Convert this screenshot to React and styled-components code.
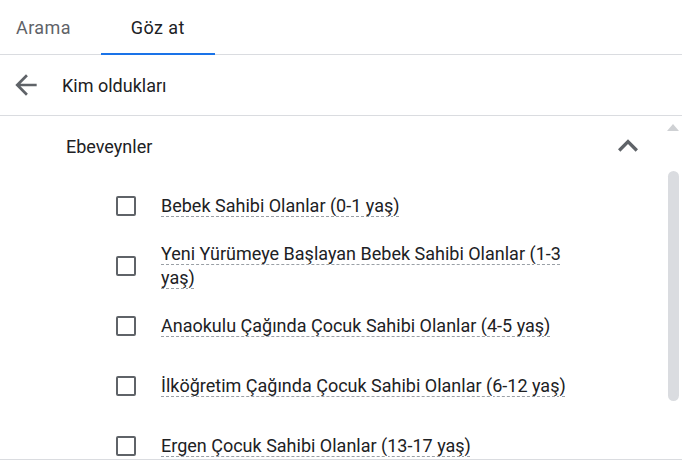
import React from "react";
import styled, { createGlobalStyle } from "styled-components";

const GlobalStyle = createGlobalStyle`
  html, body { margin: 0; padding: 0; background: #fff; }
  body { font-family: Roboto, "Noto Sans", Arial, sans-serif; }
  * { box-sizing: border-box; }
`;

const Page = styled.div`
  width: 682px;
  height: 465px;
  background: #fff;
  overflow: hidden;
  display: flex;
  flex-direction: column;
`;

const TabBar = styled.div`
  display: flex;
  height: 55px;
  border-bottom: 1px solid #dadce0;
  flex-shrink: 0;
`;

const Tab = styled.div`
  position: relative;
  display: flex;
  align-items: center;
  height: 100%;
  padding: ${(p) => (p.$first ? "0 30px 0 16px" : "0 30px")};
  font-size: 18px;
  font-weight: 400;
  letter-spacing: 0.4px;
  color: ${(p) => (p.$active ? "#202124" : "#5f6368")};
  &::after {
    content: "";
    display: ${(p) => (p.$active ? "block" : "none")};
    position: absolute;
    left: 0;
    right: 0;
    bottom: -1px;
    height: 2px;
    background: #1a73e8;
  }
`;

const HeaderRow = styled.div`
  display: flex;
  align-items: center;
  height: 61px;
  padding-left: 10px;
  border-bottom: 1px solid #dadce0;
  flex-shrink: 0;
`;

const IconBox = styled.span`
  display: inline-flex;
  width: ${(p) => p.$size}px;
  height: ${(p) => p.$size}px;
  color: #5f6368;
  flex-shrink: 0;
  svg { width: 100%; height: 100%; fill: currentColor; display: block; }
`;

const HeaderTitle = styled.div`
  margin-left: 20px;
  font-size: 18px;
  color: #202124;
`;

const ScrollArea = styled.div`
  position: relative;
  height: 344px;
  border-bottom: 1px solid #dadce0;
  flex-shrink: 0;
`;

const ScrollContent = styled.div`
  height: 100%;
  overflow: hidden;
`;

const SectionHeader = styled.div`
  display: flex;
  align-items: center;
  justify-content: space-between;
  height: 60px;
  padding-left: 66px;
  padding-right: 34px;
`;

const SectionTitle = styled.div`
  font-size: 18px;
  color: #202124;
`;

const List = styled.div`
  display: flex;
  flex-direction: column;
`;

const Row = styled.label`
  display: flex;
  align-items: center;
  min-height: 60px;
  padding: 6px 0 6px 116px;
`;

const Box = styled.span`
  width: 20px;
  height: 20px;
  border: 2px solid #5f6368;
  border-radius: 2px;
  margin-right: 25px;
  flex-shrink: 0;
`;

const Label = styled.span`
  max-width: 425px;
  font-size: 18px;
  line-height: 24px;
  color: #202124;
  text-decoration-line: underline;
  text-decoration-style: dashed;
  text-decoration-color: #9aa0a6;
  text-decoration-thickness: 1px;
  text-underline-offset: 4px;
`;

const Scrollbar = styled.div`
  position: absolute;
  top: 0;
  right: 0;
  width: 17px;
  height: 100%;
`;

const ScrollUp = styled.div`
  position: absolute;
  top: 8px;
  left: 2px;
  width: 0;
  height: 0;
  border-left: 6px solid transparent;
  border-right: 6px solid transparent;
  border-bottom: 7px solid #cfd1d4;
`;

const Thumb = styled.div`
  position: absolute;
  top: 55px;
  left: 3px;
  width: 11px;
  height: 230px;
  border-radius: 6px;
  background: #dadce0;
`;

const items = [
  "Bebek Sahibi Olanlar (0-1 yaş)",
  "Yeni Yürümeye Başlayan Bebek Sahibi Olanlar (1-3 yaş)",
  "Anaokulu Çağında Çocuk Sahibi Olanlar (4-5 yaş)",
  "İlköğretim Çağında Çocuk Sahibi Olanlar (6-12 yaş)",
  "Ergen Çocuk Sahibi Olanlar (13-17 yaş)",
];

export default function App() {
  return (
    <>
      <GlobalStyle />
      <Page>
        <TabBar>
          <Tab $first>Arama</Tab>
          <Tab $active>Göz at</Tab>
        </TabBar>
        <HeaderRow>
          <IconBox $size={32}>
            <svg viewBox="0 0 24 24">
              <path d="M20 11H7.83l5.59-5.59L12 4l-8 8 8 8 1.41-1.41L7.83 13H20v-2z" />
            </svg>
          </IconBox>
          <HeaderTitle>Kim oldukları</HeaderTitle>
        </HeaderRow>
        <ScrollArea>
          <ScrollContent>
            <SectionHeader>
              <SectionTitle>Ebeveynler</SectionTitle>
              <IconBox $size={40}>
                <svg viewBox="0 0 24 24">
                  <path d="M12 8l-6 6 1.41 1.41L12 10.83l4.59 4.58L18 14z" />
                </svg>
              </IconBox>
            </SectionHeader>
            <List>
              {items.map((t) => (
                <Row key={t}>
                  <Box />
                  <Label>{t}</Label>
                </Row>
              ))}
            </List>
          </ScrollContent>
          <Scrollbar>
            <ScrollUp />
            <Thumb />
          </Scrollbar>
        </ScrollArea>
      </Page>
    </>
  );
}
